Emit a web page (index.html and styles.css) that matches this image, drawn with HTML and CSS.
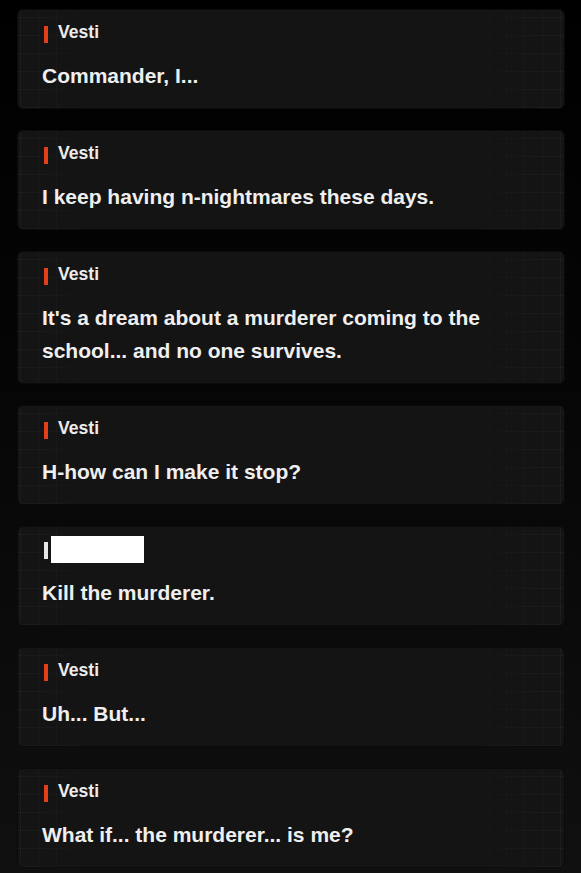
FILE: index.html
```html
<!DOCTYPE html>
<html lang="en">
<head>
<meta charset="utf-8">
<title>Dialogue</title>
<link rel="stylesheet" href="styles.css">
</head>
<body>
<main class="log">
  <section class="card">
    <div class="speaker"><span class="bar"></span><span class="name">Vesti</span></div>
    <p class="line">Commander, I...</p>
  </section>
  <section class="card">
    <div class="speaker"><span class="bar"></span><span class="name">Vesti</span></div>
    <p class="line">I keep having n-nightmares these days.</p>
  </section>
  <section class="card">
    <div class="speaker"><span class="bar"></span><span class="name">Vesti</span></div>
    <p class="line">It's a dream about a murderer coming to the school... and no one survives.</p>
  </section>
  <section class="card">
    <div class="speaker"><span class="bar"></span><span class="name">Vesti</span></div>
    <p class="line">H-how can I make it stop?</p>
  </section>
  <section class="card">
    <div class="speaker"><span class="bar bar-white"></span><span class="name redacted"></span></div>
    <p class="line">Kill the murderer.</p>
  </section>
  <section class="card">
    <div class="speaker"><span class="bar"></span><span class="name">Vesti</span></div>
    <p class="line">Uh... But...</p>
  </section>
  <section class="card">
    <div class="speaker"><span class="bar"></span><span class="name">Vesti</span></div>
    <p class="line">What if... the murderer... is me?</p>
  </section>
</main>
</body>
</html>
```
FILE: styles.css
```css
* { box-sizing: border-box; }
html, body {
  margin: 0;
  padding: 0;
}
body {
  min-height: 873px;
  background: linear-gradient(to bottom, #000 0%, #050505 40%, #101010 100%);
  font-family: "Liberation Sans", Arial, sans-serif;
  color: #eeeeee;
}
.log {
  display: flex;
  flex-direction: column;
  gap: 21px;
  padding: 9px 16px 0 17px;
}
.card {
  position: relative;
  background: #141414;
  border: 1px solid #0b0b0b;
  border-radius: 6px;
  padding: 11px 24px 16px 24px;
  overflow: hidden;
}
.card::before {
  content: "";
  position: absolute;
  inset: 0;
  background-image:
    linear-gradient(to right, rgba(255,255,255,0.035) 1px, transparent 1px),
    linear-gradient(to bottom, rgba(255,255,255,0.035) 1px, transparent 1px);
  background-size: 18px 18px;
  background-position: 2px 7px;
  -webkit-mask-image: linear-gradient(to right, #000 0%, transparent 16%, transparent 80%, #000 100%);
  mask-image: linear-gradient(to right, #000 0%, transparent 16%, transparent 80%, #000 100%);
  pointer-events: none;
}
.speaker {
  position: relative;
  display: flex;
  align-items: center;
  height: 22px;
  padding-left: 2px;
}
.bar {
  width: 4px;
  height: 17px;
  background: #e2401a;
  margin-top: 4px;
  margin-right: 10px;
  flex: none;
}
.bar-white {
  background: #e6e6e6;
  margin-top: 3px;
}
.name {
  font-size: 17.6px;
  font-weight: 700;
  color: #ececec;
}
.redacted {
  width: 93px;
  height: 27px;
  background: #ffffff;
  margin-left: -7px;
  margin-top: 1px;
}
.line {
  position: relative;
  margin: 16px 0 0 0;
  font-size: 21px;
  font-weight: 700;
  line-height: 33px;
  color: #efefef;
}
```
